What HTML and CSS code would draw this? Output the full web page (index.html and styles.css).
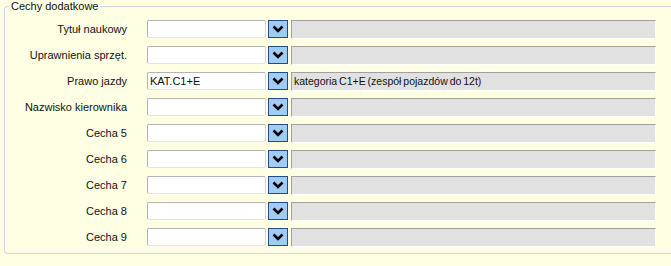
FILE: index.html
```html
<!DOCTYPE html>
<html lang="pl">
<head>
<meta charset="utf-8">
<title>Cechy dodatkowe</title>
<link rel="stylesheet" href="styles.css">
</head>
<body>
<fieldset class="group">
  <legend class="group-title">Cechy dodatkowe</legend>
  <div class="rows">
    <div class="row"><span class="label">Tytuł naukowy</span><span class="input"></span><span class="drop"><svg viewBox="0 0 18 16" width="18" height="16"><polyline points="4.5,5.5 9,10 13.5,5.5" fill="none" stroke="#000" stroke-width="2.6"/></svg></span><span class="desc"></span></div>
    <div class="row"><span class="label">Uprawnienia sprzęt.</span><span class="input"></span><span class="drop"><svg viewBox="0 0 18 16" width="18" height="16"><polyline points="4.5,5.5 9,10 13.5,5.5" fill="none" stroke="#000" stroke-width="2.6"/></svg></span><span class="desc"></span></div>
    <div class="row"><span class="label">Prawo jazdy</span><span class="input">KAT.C1+E</span><span class="drop"><svg viewBox="0 0 18 16" width="18" height="16"><polyline points="4.5,5.5 9,10 13.5,5.5" fill="none" stroke="#000" stroke-width="2.6"/></svg></span><span class="desc">kategoria C1+E (zespół pojazdów do 12t)</span></div>
    <div class="row"><span class="label">Nazwisko kierownika</span><span class="input"></span><span class="drop"><svg viewBox="0 0 18 16" width="18" height="16"><polyline points="4.5,5.5 9,10 13.5,5.5" fill="none" stroke="#000" stroke-width="2.6"/></svg></span><span class="desc"></span></div>
    <div class="row"><span class="label">Cecha 5</span><span class="input"></span><span class="drop"><svg viewBox="0 0 18 16" width="18" height="16"><polyline points="4.5,5.5 9,10 13.5,5.5" fill="none" stroke="#000" stroke-width="2.6"/></svg></span><span class="desc"></span></div>
    <div class="row"><span class="label">Cecha 6</span><span class="input"></span><span class="drop"><svg viewBox="0 0 18 16" width="18" height="16"><polyline points="4.5,5.5 9,10 13.5,5.5" fill="none" stroke="#000" stroke-width="2.6"/></svg></span><span class="desc"></span></div>
    <div class="row"><span class="label">Cecha 7</span><span class="input"></span><span class="drop"><svg viewBox="0 0 18 16" width="18" height="16"><polyline points="4.5,5.5 9,10 13.5,5.5" fill="none" stroke="#000" stroke-width="2.6"/></svg></span><span class="desc"></span></div>
    <div class="row"><span class="label">Cecha 8</span><span class="input"></span><span class="drop"><svg viewBox="0 0 18 16" width="18" height="16"><polyline points="4.5,5.5 9,10 13.5,5.5" fill="none" stroke="#000" stroke-width="2.6"/></svg></span><span class="desc"></span></div>
    <div class="row"><span class="label">Cecha 9</span><span class="input"></span><span class="drop"><svg viewBox="0 0 18 16" width="18" height="16"><polyline points="4.5,5.5 9,10 13.5,5.5" fill="none" stroke="#000" stroke-width="2.6"/></svg></span><span class="desc"></span></div>
  </div>
</fieldset>
</body>
</html>
```
FILE: styles.css
```css
html, body {
  margin: 0;
  padding: 0;
  background: #ffffe3;
}
body {
  font-family: "Liberation Sans", Arial, sans-serif;
  font-size: 11px;
  color: #111;
}
.group {
  margin: 0 0 0 4px;
  padding: 0 0 12px 0;
  border: 1px solid #d2d8e0;
  border-right: none;
  border-radius: 4px 0 0 4px;
  height: 254px;
  box-sizing: border-box;
  min-width: 0;
}
.group-title {
  margin-left: 4px;
  padding: 0 2px;
  line-height: 12px;
  color: #111;
}
.rows {
  display: flex;
  flex-direction: column;
  gap: 7px;
  padding: 8px 0 0 5px;
}
.row {
  display: flex;
  align-items: flex-start;
  height: 19px;
}
.label {
  width: 117px;
  margin-right: 20px;
  text-align: right;
  line-height: 19px;
}
.input {
  width: 119px;
  height: 18px;
  box-sizing: border-box;
  background: #fff;
  border: 1px solid #b4b4b4;
  border-bottom-color: #e3e3e3;
  border-right-color: #d6d6d6;
  border-radius: 2px;
  padding-left: 2px;
  line-height: 16px;
  margin-right: 2px;
}
.drop {
  width: 20px;
  height: 18px;
  box-sizing: border-box;
  background: #9fcbf5;
  border: 1px solid #1f4f7d;
  display: flex;
  align-items: center;
  justify-content: center;
  margin-right: 3px;
}
.desc {
  width: 365px;
  height: 19px;
  box-sizing: border-box;
  background: #e1e1e1;
  border-top: 1px solid #a0a0a0;
  border-left: 1px solid #a0a0a0;
  border-right: 1px solid #fff;
  border-bottom: 1px solid #fff;
  padding-left: 2px;
  line-height: 17px;
  font-size: 10.5px;
  word-spacing: -1px;
}
```
